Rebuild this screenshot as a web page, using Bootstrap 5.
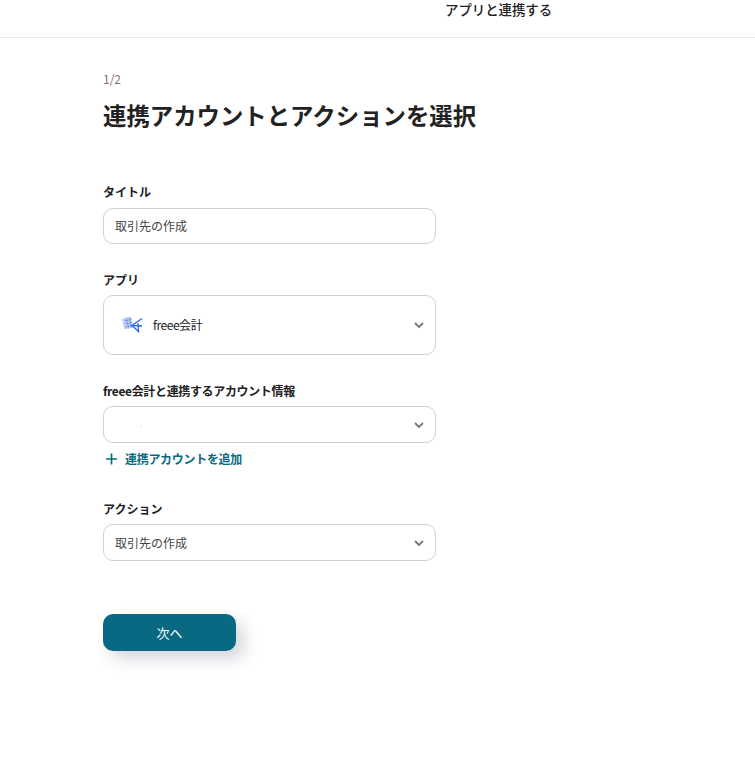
<!DOCTYPE html>
<html lang="ja">
<head>
    <meta charset="UTF-8">
    <meta name="viewport" content="width=device-width, initial-scale=1.0">
    <title>アプリと連携する</title>
    <link href="https://cdn.jsdelivr.net/npm/bootstrap@5.3.3/dist/css/bootstrap.min.css" rel="stylesheet">
    <script src="https://cdn.jsdelivr.net/npm/bootstrap@5.3.3/dist/js/bootstrap.bundle.min.js"></script>
    <style>
        body {
            font-family: "Noto Sans CJK JP", "Noto Sans", sans-serif;
            color: #222;
            background: #fff;
        }
        .top-bar {
            height: 38px;
            border-bottom: 1px solid #e6e6e6;
            font-size: 13.4px;
            font-weight: 500;
            line-height: 18px;
            padding-left: 445px;
        }
        .page-body {
            width: 333px;
            margin-left: 103px;
            padding-bottom: 100px;
        }
        .step-no {
            font-size: 12px;
            line-height: 16px;
            color: #8a6f6a;
            margin-top: 33px;
        }
        .page-title {
            font-size: 23.4px;
            font-weight: 700;
            line-height: 32px;
            white-space: nowrap;
            margin: 12px 0 52px;
        }
        .field-label {
            font-size: 12px;
            font-weight: 700;
            line-height: 18px;
            margin-bottom: 7px;
            color: #222;
        }
        .field-label.tight {
            margin-bottom: 6px;
        }
        .field-label.condensed {
            margin-bottom: 6px;
            letter-spacing: -.35px;
        }
        .field-gap-a { margin-top: 27px; }
        .field-gap-b { margin-top: 27px; }
        .field-gap-c { margin-top: 32px; }
        .field-box {
            display: flex;
            align-items: center;
            height: 36px;
            border: 1px solid #cfcfd6;
            border-radius: 10px;
            font-size: 12px;
            color: #444;
            padding: 0 10px 0 11px;
        }
        .field-box.tall {
            height: 60px;
            padding-left: 18px;
        }
        .field-box.mid {
            height: 37px;
        }
        .field-box .chev {
            margin-left: auto;
        }
        .app-name {
            color: #222;
            letter-spacing: -.45px;
            margin-left: 1px;
        }
        .speck {
            width: 2px;
            height: 1px;
            background: #d5e2ea;
            margin-left: 25px;
            margin-top: 3px;
        }
        .add-link {
            margin-top: 7px;
            font-size: 12px;
            font-weight: 700;
            color: #0a6982;
            text-decoration: none;
            line-height: 18px;
            letter-spacing: -.3px;
        }
        .next-btn {
            width: 133px;
            height: 37px;
            margin-top: 53px;
            background: #0a6982;
            border: 0;
            border-radius: 10px;
            color: #fff;
            font-size: 13px;
            box-shadow: 8px 8px 16px rgba(40, 60, 80, .2);
        }
    </style>
</head>
<body>

    <div class="top-bar">アプリと連携する</div>

    <main class="page-body">
        <div class="step-no">1/2</div>
        <h1 class="page-title">連携アカウントとアクションを選択</h1>

        <div class="field-label">タイトル</div>
        <div class="field-box">取引先の作成</div>

        <div class="field-label tight field-gap-a">アプリ</div>
        <div class="field-box tall">
            <svg class="me-2" width="22" height="20" viewBox="0 0 22 20">
                <rect x="1" y="2.500" width="9" height="11" fill="#c3d2f8" transform="rotate(-12 6 8)"/>
                <path d="M2 6l8-1.700M2.500 9l8-1.700M3 12l7-1.500M4.500 2.500l2 11M7.500 2l2 11" stroke="#6d8fea" stroke-width=".8"/>
                <path d="M20 3.500 10 10.500l10 .5M10 10.500l7 6.500M16 8l.5 9.500" fill="none" stroke="#2f66ee" stroke-width="1.300"/>
            </svg>
            <span class="app-name">freee会計</span>
            <svg class="chev" width="12" height="12" viewBox="0 0 12 12"><path d="M2 4l4 4 4-4" fill="none" stroke="#777" stroke-width="1.800"/></svg>
        </div>

        <div class="field-label condensed field-gap-b">freee会計と連携するアカウント情報</div>
        <div class="field-box mid">
            <span class="speck"></span>
            <svg class="chev" width="12" height="12" viewBox="0 0 12 12"><path d="M2 4l4 4 4-4" fill="none" stroke="#777" stroke-width="1.800"/></svg>
        </div>
        <a class="add-link d-flex align-items-center gap-2" href="#">
            <svg width="14" height="14" viewBox="0 0 14 14"><path d="M8.500 1.500v11M3 7h11" stroke="#0a6982" stroke-width="1.700"/></svg>
            連携アカウントを追加
        </a>

        <div class="field-label tight field-gap-c">アクション</div>
        <div class="field-box mid">
            取引先の作成
            <svg class="chev" width="12" height="12" viewBox="0 0 12 12"><path d="M2 4l4 4 4-4" fill="none" stroke="#777" stroke-width="1.800"/></svg>
        </div>

        <button class="btn next-btn" type="button">次へ</button>
    </main>

</body>
</html>
